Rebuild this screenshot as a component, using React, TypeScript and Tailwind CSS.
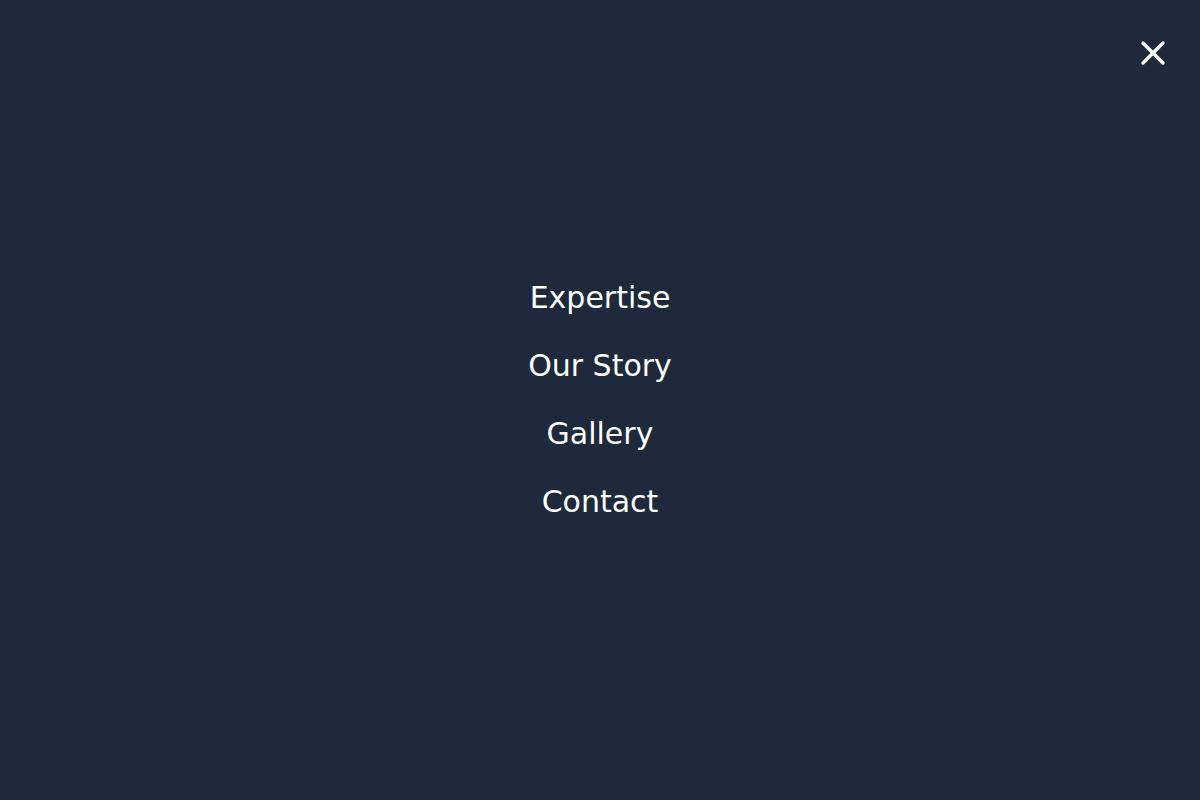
import { X } from "lucide-react";

const LINKS = ["Expertise", "Our Story", "Gallery", "Contact"];

export default function App() {
  return (
    <div
      className="relative h-[800px] w-full bg-[#1e293b] flex items-center justify-center"
      style={{ fontFamily: "'DejaVu Sans', sans-serif" }}
    >
      <button className="absolute top-[33px] right-[27px] text-white">
        <X size={40} strokeWidth={2} />
      </button>
      <nav className="flex flex-col items-center gap-8">
        {LINKS.map((l) => (
          <a key={l} href="#" className="text-3xl text-white">
            {l}
          </a>
        ))}
      </nav>
    </div>
  );
}
